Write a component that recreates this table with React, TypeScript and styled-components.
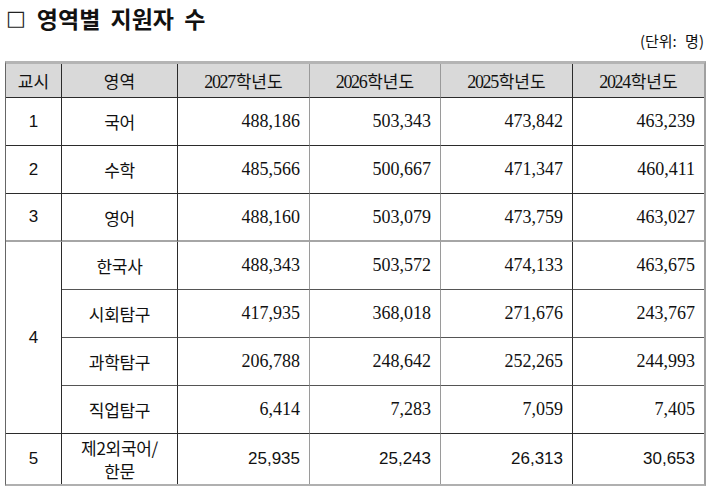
import styled, { createGlobalStyle } from "styled-components";

const GlobalStyle = createGlobalStyle`
    body {
        margin: 0;
        background: #ffffff;
        font-family: "Noto Sans CJK KR", "Noto Sans", sans-serif;
        color: #111;
    }
`

type Row = {
    period?: string;
    span?: number;
    area: string[];
    values: string[];
    sans?: boolean;
    bottom?: "dark" | "gray" | "mid" | "none";
};

const rows: Row[] = [
    { period: "1", area: ["국어"], values: ["488,186", "503,343", "473,842", "463,239"] },
    { period: "2", area: ["수학"], values: ["485,566", "500,667", "471,347", "460,411"] },
    { period: "3", area: ["영어"], values: ["488,160", "503,079", "473,759", "463,027"], bottom: "gray" },
    { period: "4", span: 4, area: ["한국사"], values: ["488,343", "503,572", "474,133", "463,675"], bottom: "mid" },
    { area: ["시회탐구"], values: ["417,935", "368,018", "271,676", "243,767"], bottom: "mid" },
    { area: ["과학탐구"], values: ["206,788", "248,642", "252,265", "244,993"], bottom: "mid" },
    { area: ["직업탐구"], values: ["6,414", "7,283", "7,059", "7,405"] },
    { period: "5", area: ["제2외국어/", "한문"], values: ["25,935", "25,243", "26,313", "30,653"], sans: true, bottom: "none" },
];

const years = ["2027", "2026", "2025", "2024"];

const bottomColor = {
    dark: "1px solid #2b2b2b",
    gray: "2px solid #a6a6a6",
    mid: "1px solid #555555",
    none: "none",
};

export default function App() {
    return (
        <Page>
            <GlobalStyle />
            <Title>
                <Box>□</Box>
                <span>영역별 지원자 수</span>
            </Title>
            <Unit>(단위: 명)</Unit>
            <Table>
                <colgroup>
                    <col style={{ width: 56 }} />
                    <col style={{ width: 116 }} />
                    <col style={{ width: 132 }} />
                    <col style={{ width: 131 }} />
                    <col style={{ width: 132 }} />
                    <col style={{ width: 131 }} />
                </colgroup>
                <thead>
                    <tr>
                        <Head $col={0}>교시</Head>
                        <Head $col={1}>영역</Head>
                        {years.map((y, i) => (
                            <Head key={y} $col={i + 2}>
                                <Year>{y}</Year>학년도
                            </Head>
                        ))}
                    </tr>
                </thead>
                <tbody>
                    {rows.map((r, ri) => {
                        const b = r.bottom ?? "dark";
                        return (
                            <BodyRow key={ri} $tall={ri === rows.length - 1}>
                                {r.period && (
                                    <Period rowSpan={r.span ?? 1} $bottom={r.span ? "dark" : b}>
                                        {r.period}
                                    </Period>
                                )}
                                <Area $bottom={b} $multi={r.area.length > 1}>
                                    {r.area.map(a => <div key={a}>{a}</div>)}
                                </Area>
                                {r.values.map((v, i) => (
                                    <Num key={i} $col={i + 2} $bottom={b} $sans={r.sans}>
                                        {v}
                                    </Num>
                                ))}
                            </BodyRow>
                        );
                    })}
                </tbody>
            </Table>
        </Page>
    );
}

const rightBorder = (col: number) => {
    if (col === 5) return "none";
    if (col === 2 || col === 3) return "1px solid #9a9a9a";
    return "1px solid #2b2b2b";
};

const Page = styled.div`
    padding: 5px 5px 0 5px;
    width: 700px;
`

const Title = styled.h1`
    align-items: center;
    display: flex;
    font-family: "Noto Sans CJK KR", sans-serif;
    font-size: 23px;
    font-weight: 700;
    gap: 11px;
    height: 26px;
    margin: 0;
    padding-left: 1px;
    word-spacing: 5px;
`

const Box = styled.span`
    font-family: "DejaVu Sans", sans-serif;
    font-size: 21px;
    font-weight: 400;
    color: #222;
`

const Unit = styled.div`
    font-family: "Noto Sans CJK KR", sans-serif;
    font-size: 15px;
    height: 20px;
    line-height: 20px;
    margin-bottom: 10px;
    padding-right: 1px;
    text-align: right;
    word-spacing: 5px;
`

const Table = styled.table`
    border-collapse: separate;
    border-spacing: 0;
    border-top: 3px solid #b4b4b4;
    border-left: 1px solid #666;
    border-right: 2px solid #a0a0a0;
    border-bottom: 2px solid #b0b0b0;
    table-layout: fixed;
    width: 700px;
`

const Head = styled.th<{ $col: number }>`
    background: #d9d9d9;
    border-bottom: 1px solid #2b2b2b;
    border-right: ${p => rightBorder(p.$col)};
    font-family: "Noto Sans CJK KR", sans-serif;
    font-size: 17px;
    font-weight: 400;
    height: 33px;
    padding: 0;
    text-align: center;
`

const Year = styled.span`
    font-family: "Liberation Serif", serif;
    font-size: 18px;
    letter-spacing: -1.4px;
    margin-right: 1px;
`

const BodyRow = styled.tr<{ $tall?: boolean }>`
    height: ${p => (p.$tall ? 50 : 48)}px;
`

const Period = styled.td<{ $bottom: keyof typeof bottomColor }>`
    border-bottom: ${p => bottomColor[p.$bottom]};
    border-right: 1px solid #2b2b2b;
    font-family: "Liberation Sans", sans-serif;
    font-size: 17px;
    padding: 0;
    text-align: center;
`

const Area = styled.td<{ $bottom: keyof typeof bottomColor; $multi?: boolean }>`
    border-bottom: ${p => bottomColor[p.$bottom]};
    border-right: 1px solid #2b2b2b;
    font-family: "Noto Sans CJK KR", sans-serif;
    font-size: 17px;
    letter-spacing: -0.3px;
    line-height: ${p => (p.$multi ? "23px" : "normal")};
    padding: 0;
    text-align: center;
    white-space: nowrap;
`

const Num = styled.td<{ $col: number; $bottom: keyof typeof bottomColor; $sans?: boolean }>`
    border-bottom: ${p => bottomColor[p.$bottom]};
    border-right: ${p => rightBorder(p.$col)};
    font-family: ${p => (p.$sans ? `"Liberation Sans", sans-serif` : `"Liberation Serif", serif`)};
    font-size: ${p => (p.$sans ? 17 : 18)}px;
    padding: 0 9px 0 0;
    text-align: right;
`
